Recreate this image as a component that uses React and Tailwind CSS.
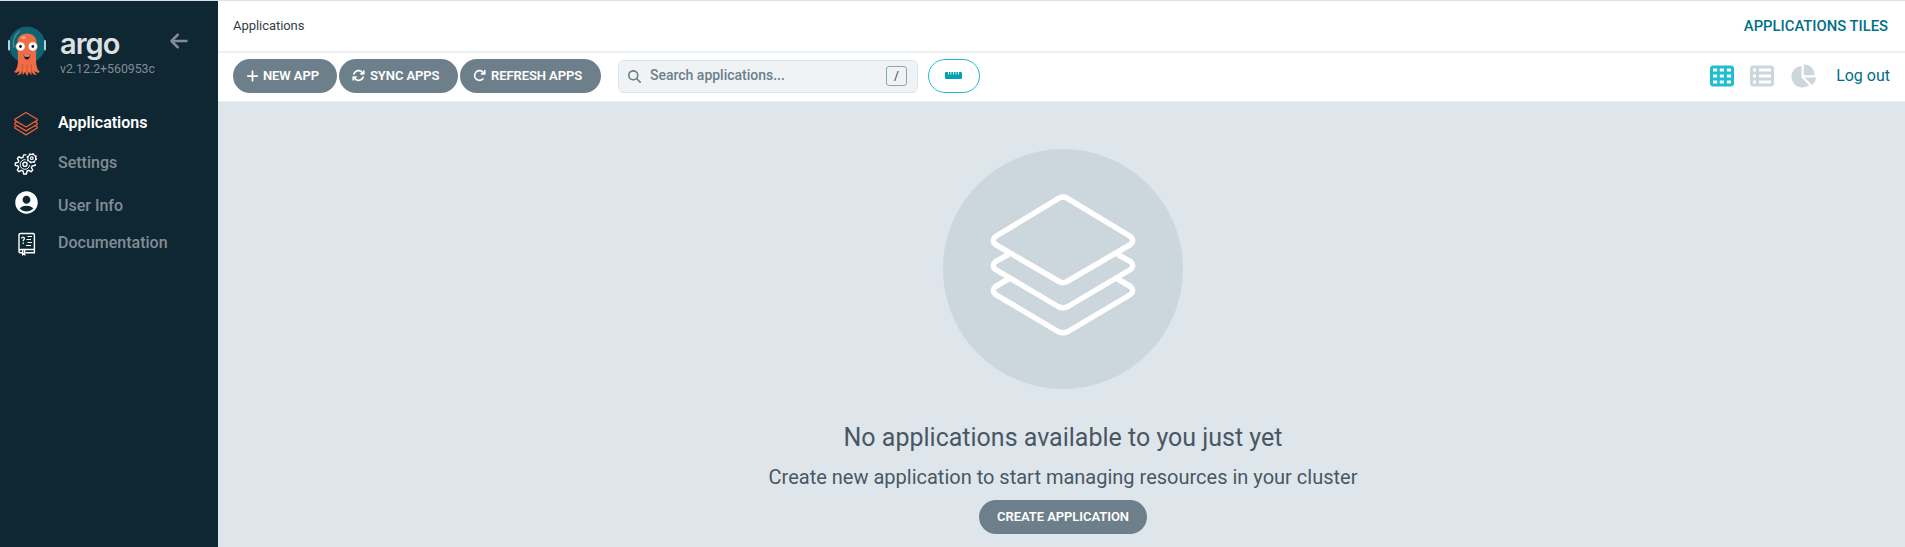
import React from 'react';
import {
  FaPlus,
  FaArrowsRotate,
  FaArrowRotateRight,
  FaMagnifyingGlass,
  FaRulerHorizontal,
  FaTableCells,
  FaTableList,
  FaChartPie,
  FaArrowLeft,
} from 'react-icons/fa6';
import { MdAccountCircle } from 'react-icons/md';

function Mascot() {
  return (
    <svg width="38" height="52" viewBox="0 0 38 52" className="shrink-0">
      <circle cx="19" cy="19" r="18" fill="#0e6470" stroke="#21566a" strokeWidth="1" />
      <path d="M6 22C4 15 7 8 12 5" fill="none" stroke="#4d8d98" strokeWidth="1.3" />
      <rect x="0" y="14" width="2" height="10.5" rx="1" fill="#b6cfe3" />
      <rect x="36" y="14" width="2" height="10.5" rx="1" fill="#b6cfe3" />
      <path
        d="M9.500 16C9.500 11 13.500 7.500 19 7.500S28.500 11 28.500 16C28.500 22 28 27 28 33C28 39 29 44 32 46C30 47.500 27.500 46.500 26.500 44.500C26.500 46.500 27.500 48 29 49C26.500 49.500 24.500 48 23.500 45L23.500 49.500L21 46L19 50L17 46L14.500 49.500L14.500 45C13.500 48 11.500 49.500 9 49C10.500 48 11.500 46.500 11.500 44.500C10.500 46.500 8 47.500 6 46C9 44 10 39 10 33C10 27 9.500 22 9.500 16Z"
        fill="#ef6c45"
      />
      <path d="M15 38L14 46M19 39V47M23 38L24 46" stroke="#b9482f" strokeWidth="0.700" fill="none" />
      <ellipse cx="15.500" cy="11.500" rx="2.200" ry="1.600" fill="#f9a386" />
      <circle cx="12.500" cy="20.500" r="4.700" fill="#fff" stroke="#d9532f" strokeWidth="0.600" />
      <circle cx="24.800" cy="20.500" r="4.700" fill="#fff" stroke="#d9532f" strokeWidth="0.600" />
      <circle cx="12.500" cy="20.500" r="1.400" fill="#101820" />
      <circle cx="24.800" cy="20.500" r="1.400" fill="#101820" />
      <path d="M15.500 28.500C17.500 30 20 30 22.300 28.500C22 31.500 20.800 33.500 19 33.500S16 31.500 15.500 28.500Z" fill="#2b1416" />
      <path d="M16.300 29.100C18 30.100 20 30.100 21.600 29.100L21.200 30.400H16.700Z" fill="#fff" />
    </svg>
  );
}

function LayersIcon() {
  return (
    <svg width="26" height="26" viewBox="0 0 26 26" fill="none" stroke="#ef5f3c" strokeWidth="1.250" strokeLinejoin="round">
      <path d="M13 1.500L24.200 8.200V9.400L13 16L1.800 9.400V8.200Z" />
      <path d="M3.600 10.900L1.800 12V13.200L13 19.900L24.200 13.200V12L22.400 10.900" />
      <path d="M3.600 14.700L1.800 15.800V17L13 23.900L24.200 17V15.800L22.400 14.700" />
    </svg>
  );
}

function GearsIcon() {
  return (
    <svg width="24" height="24" viewBox="0 0 24 24" fill="none" stroke="#fff" strokeWidth="1.400" strokeLinejoin="round">
      <path d="M12.400 2.900H9.600L9 5.400L7.300 6.100L5 4.700L3.300 6.400L4.700 8.700L4 10.400L1.300 11V13.400L4 14L4.700 15.700L3.300 18L5 19.700L7.300 18.300L9 19L9.700 22H12.400L13.100 19L14.800 18.300L17.100 19.700L18.800 18L17.400 15.700L18.100 14L21.200 13.400V12" />
      <path d="M11.500 7.700A4.800 4.800 0 1 0 15.700 13" strokeWidth="1" />
      <circle cx="11" cy="12.300" r="2.100" />
      <circle cx="17.800" cy="6.200" r="3.900" strokeWidth="1.200" />
      <circle cx="17.800" cy="6.200" r="4.600" strokeWidth="1.400" strokeDasharray="1.900 1.710" />
      <circle cx="17.800" cy="6.200" r="1.300" strokeWidth="1.200" />
    </svg>
  );
}

function DocsIcon() {
  return (
    <svg width="18" height="24" viewBox="0 0 18 24" fill="none" stroke="#fff" strokeWidth="1.400">
      <path d="M4 20.800H2.600C1.600 20.800 1 20.200 1 19.300V3C1 2 1.700 1.500 2.700 1.500H15C15.900 1.500 16.400 2 16.400 2.900V17.500H2.800C1.700 17.500 1 18.200 1 19.300M16.400 17.500V20.800H7.500" />
      <path d="M4.700 17.500V22.500L5.700 21.700L6.700 22.500V17.500" />
      <path d="M3.700 6.500C3.700 4.700 6.400 4.700 6.400 6.500C6.400 7.700 5.200 7.700 5.200 9.300M5.200 10.600V12" strokeWidth="1.300" />
      <path d="M9.500 4.500H14M8.500 7.500H13M9.500 10.500H14M8 13.500H13" strokeWidth="1.200" />
    </svg>
  );
}

function BigLayers() {
  return (
    <svg width="150" height="146" viewBox="0 0 150 146" fill="none" stroke="#fff" strokeWidth="5.500" strokeLinejoin="round">
      <path d="M71 5.200Q75 3 79 5.200L142.500 43.500Q147 47.500 142.500 51.500L79 88.500Q75 91 71 88.500L7.500 51.500Q3 47.500 7.500 43.500Z" />
      <path d="M20.500 61.500L7.500 68.500Q3 72.500 7.500 76.500L70 113.500Q75 116 80 113.500L142.500 76.500Q147 72.500 142.500 68.500L129.500 61.500" />
      <path d="M20.500 86L7.500 93.500Q3 97.500 7.500 101.500L70 138.500Q75 141 80 138.500L142.500 101.500Q147 97.500 142.500 93.500L129.500 86" />
    </svg>
  );
}

function NavItem({ icon, label, rowClass, iconClass = '', active = false }) {
  return (
    <a className={`flex items-center ${rowClass}`}>
      <span className={`flex w-[52px] shrink-0 justify-center ${iconClass}`}>{icon}</span>
      <span className={`ml-[6px] text-[16px] leading-none ${active ? 'font-semibold text-white' : 'font-medium text-[#818d94]'}`}>{label}</span>
    </a>
  );
}

function ActionButton({ icon, label, className }) {
  return (
    <button className={`flex h-[34px] items-center rounded-full bg-[#6d7f8b] pb-px pl-[13px] text-[13px] font-semibold tracking-[-0.08px] text-white ${className}`}>
      {icon}
      <span className="whitespace-nowrap">{label}</span>
    </button>
  );
}

export default function App() {
  return (
    <div className="flex h-[547px] w-full overflow-hidden border-t border-[#dfe0e0] bg-[#dee6ec] font-['Roboto',sans-serif]">
      <aside className="w-[218px] shrink-0 bg-[#0f2733]">
        <div className="flex h-[102px] items-start pl-2 pt-[25px]">
          <Mascot />
          <div className="ml-[14px] w-[99px]">
            <div className="h-[36px] pt-px text-[29px] font-semibold leading-[34px] tracking-[-1px] text-[#dee1e3] font-['Inter',sans-serif]">argo</div>
            <div className="text-[12.300px] leading-[15px] text-[#818d94]">v2.12.2+560953c</div>
          </div>
          <FaArrowLeft className="ml-[10px] mt-[5px] h-5 w-5 text-[#818d94]" />
        </div>
        <nav>
          <NavItem active icon={<LayersIcon />} label="Applications" rowClass="h-[40px]" iconClass="pt-[2px]" />
          <NavItem icon={<GearsIcon />} label="Settings" rowClass="h-[40px]" iconClass="pt-[2px]" />
          <NavItem icon={<MdAccountCircle className="h-[27px] w-[27px] text-white" />} label="User Info" rowClass="h-[46px]" iconClass="pb-[7px]" />
          <NavItem icon={<DocsIcon />} label="Documentation" rowClass="h-[28px]" iconClass="pl-px pt-[2px]" />
        </nav>
      </aside>

      <div className="flex min-w-0 flex-1 flex-col">
        <header className="flex h-[52px] shrink-0 items-center justify-between border-b-2 border-[#edf1f5] bg-white pl-[15px] pr-[17px]">
          <span className="text-[13px] tracking-[-0.05px] text-[#363c4a]">Applications</span>
          <span className="text-[14.800px] font-medium text-[#006f8a]">APPLICATIONS TILES</span>
        </header>

        <div className="flex h-[49px] shrink-0 items-start border-b border-[#edf1f5] bg-white px-[15px] pt-[6px]">
          <div className="flex gap-[2px]">
            <ActionButton className="w-[104px]" icon={<FaPlus className="mr-[4px] h-[14px] w-[13px]" />} label="NEW APP" />
            <ActionButton className="w-[119px]" icon={<FaArrowsRotate className="mr-[5px] h-[13px] w-[13px]" />} label="SYNC APPS" />
            <ActionButton className="w-[141px]" icon={<FaArrowRotateRight className="mr-[5px] h-[13px] w-[13px]" />} label="REFRESH APPS" />
          </div>
          <div className="ml-[17px] mt-px flex h-[33px] w-[300px] items-center rounded-[6px] border border-[#dee6eb] bg-[#eff3f5] pb-px pl-[9px] pr-[10px]">
            <FaMagnifyingGlass className="h-[13px] w-[13px] text-[#6d7f8b]" />
            <span className="ml-[9px] flex-1 pb-px text-[14px] font-medium tracking-[-0.01px] text-[#6d7f8b]">Search applications...</span>
            <span className="flex h-5 w-[21px] items-center justify-center rounded-[3px] border border-[#8fa4b1] text-[12px] text-[#363c4a]">/</span>
          </div>
          <button className="ml-[10px] flex h-[34px] w-[52px] items-center justify-center rounded-full border border-[#1fbdd0] pb-px pr-px">
            <FaRulerHorizontal className="h-[17px] w-[17px] text-[#00a2b3]" />
          </button>
          <div className="ml-auto flex h-[34px] items-center">
            <FaTableCells className="h-[24px] w-[24px] text-[#1fbdd0]" />
            <FaTableList className="ml-[16px] h-[24px] w-[24px] text-[#ccd6dd]" />
            <FaChartPie className="ml-[16px] mr-px h-[26px] w-[26px] text-[#ccd6dd]" />
            <span className="ml-[19px] pb-px text-[16px] text-[#006f8a]">Log out</span>
          </div>
        </div>

        <main className="flex flex-1 flex-col items-center pl-[3px] pt-[47px]">
          <div className="flex h-[240px] w-[240px] shrink-0 items-center justify-center rounded-full bg-[#ccd6dd] pb-[6px]">
            <BigLayers />
          </div>
          <h1 className="mt-[31px] text-[25px] leading-[36px] text-[#495763]">No applications available to you just yet</h1>
          <h2 className="mt-[7px] text-[20px] leading-[28px] text-[#495763]">Create new application to start managing resources in your cluster</h2>
          <button className="mt-[9px] h-[34px] w-[168px] shrink-0 rounded-full bg-[#6d7f8b] pb-px text-[13px] font-semibold tracking-[-0.05px] text-white">CREATE APPLICATION</button>
        </main>
      </div>
    </div>
  );
}
